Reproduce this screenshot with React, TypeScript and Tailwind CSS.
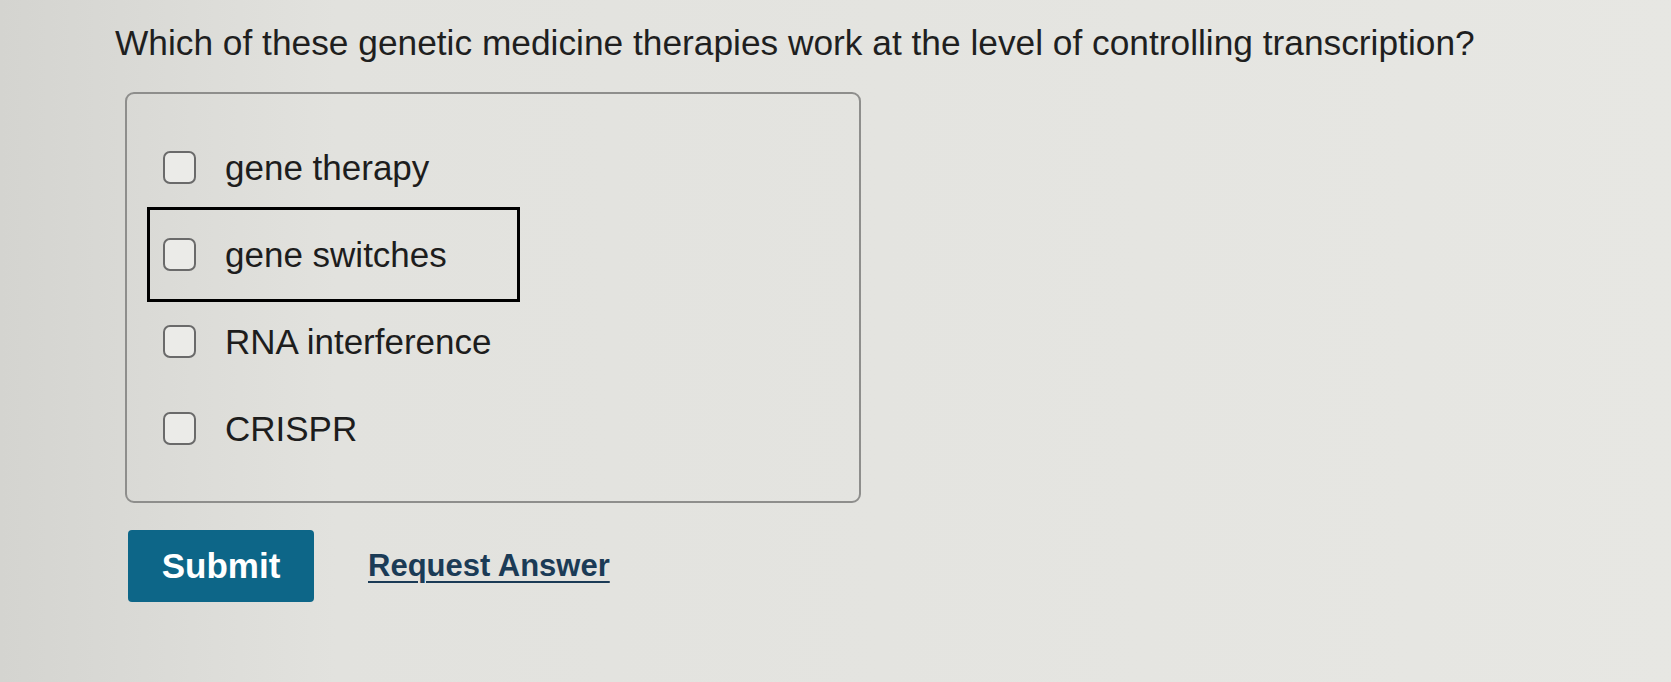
import React from 'react';

const options = [
  { id: 'gene-therapy', label: 'gene therapy' },
  { id: 'gene-switches', label: 'gene switches', focused: true },
  { id: 'rnai', label: 'RNA interference' },
  { id: 'crispr', label: 'CRISPR' },
];

function OptionRow({ label, focused }: { label: string; focused?: boolean }) {
  return (
    <label
      className={
        'flex h-[87px] w-[365px] items-center gap-[29px] pl-[12px] cursor-pointer ' +
        (focused ? 'outline-[3px] outline-solid outline-black outline-offset-[1px]' : '')
      }
    >
      <span className="h-[33px] w-[33px] shrink-0 rounded-[7px] border-2 border-[#6a6a6a] bg-[#ebebe8]" />
      <span className="text-[35px] leading-[40px] text-[#1d1d1d]">{label}</span>
    </label>
  );
}

export default function App() {
  return (
    <div
      className="h-[682px] w-full overflow-hidden bg-linear-to-r from-[#d4d4d0] via-[#e2e2de] via-20% to-[#e7e7e3] pl-[115px] pt-[23px]"
      style={{ fontFamily: '"Liberation Sans", Arial, sans-serif' }}
    >
      <h1 className="text-[35.3px] leading-[40px] font-normal text-[#1f1f1f]">
        Which of these genetic medicine therapies work at the level of controlling transcription?
      </h1>

      <div className="ml-[10px] mt-[29px] h-[411px] w-[736px] rounded-[9px] border-2 border-[#8e8e8c] pl-[24px] pt-[30px]">
        {options.map((o) => (
          <OptionRow key={o.id} label={o.label} focused={o.focused} />
        ))}
      </div>

      <div className="ml-[13px] mt-[27px] flex items-center gap-[54px]">
        <button className="flex h-[72px] w-[186px] items-center justify-center rounded-[4px] bg-[#0d6688] text-[35px] font-bold text-white">
          Submit
        </button>
        <a
          href="#"
          className="text-[31px] font-bold text-[#1b3b56] underline decoration-2 underline-offset-[5px]"
        >
          Request Answer
        </a>
      </div>
    </div>
  );
}
